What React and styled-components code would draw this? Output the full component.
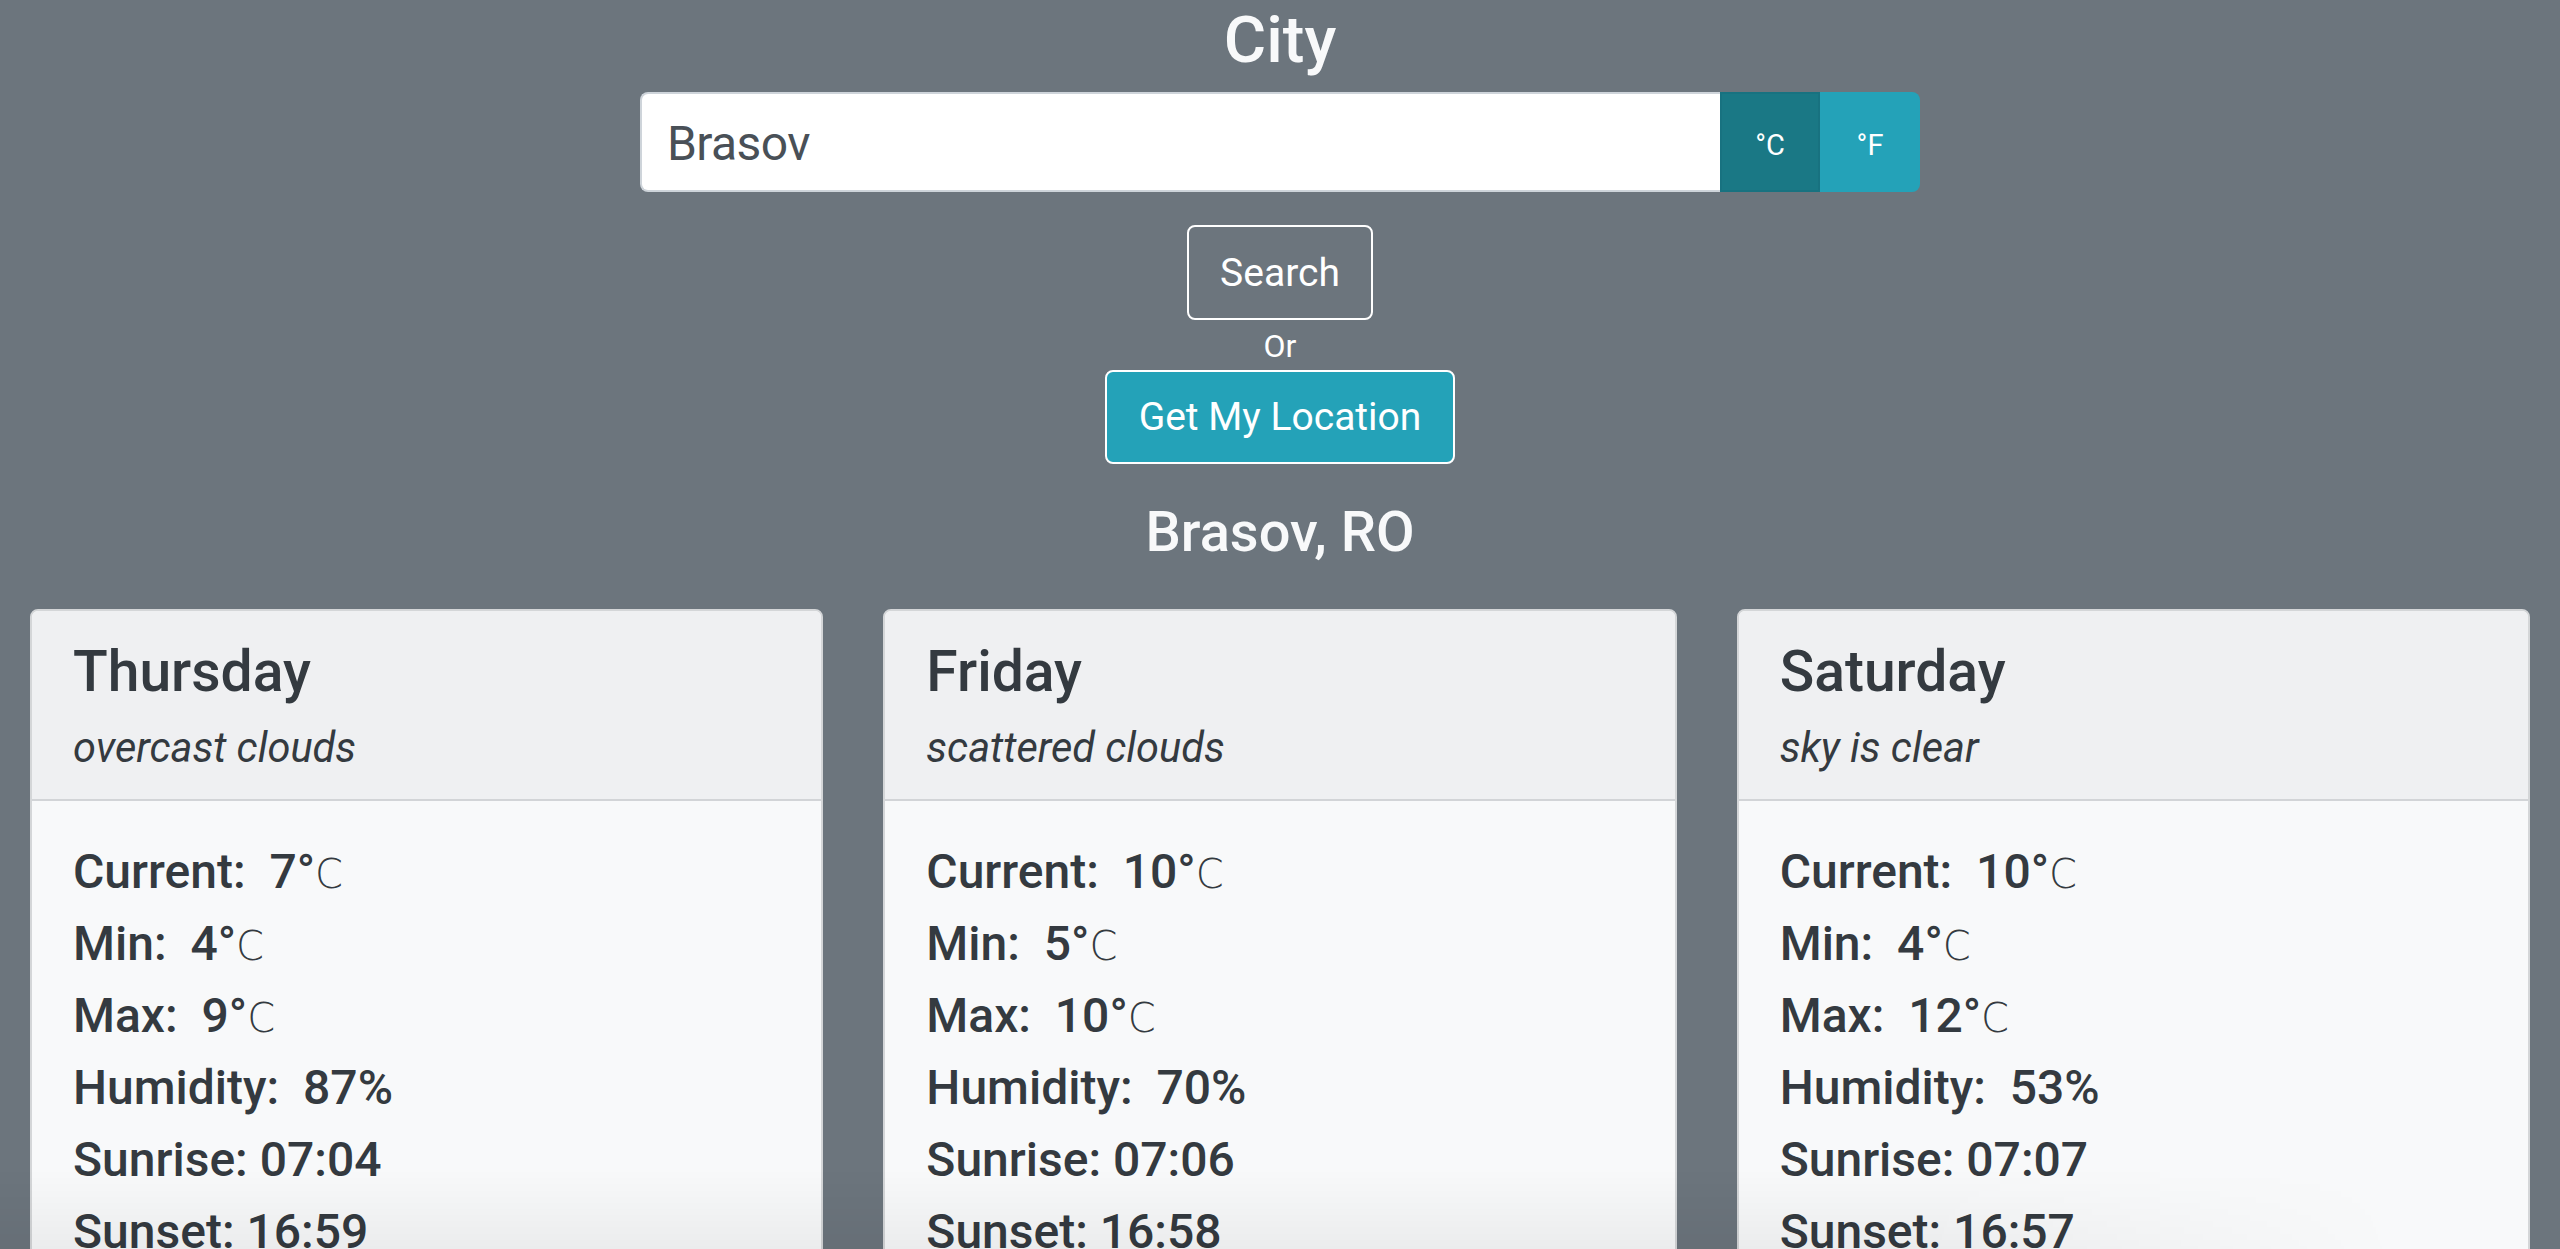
import React from "react";
import styled, { createGlobalStyle } from "styled-components";

const GlobalStyle = createGlobalStyle`
  * {
    box-sizing: border-box;
  }
  body {
    margin: 0;
    background: #6c757d;
    font-family: Roboto, Inter, "Liberation Sans", sans-serif;
    color: #f8f9fa;
  }
`;

const Page = styled.div`
  min-height: 100vh;
`;

const SearchArea = styled.div`
  display: flex;
  flex-direction: column;
  align-items: center;
`;

const Title = styled.h1`
  margin: 2px 0 14px;
  font-size: 65px;
  line-height: 76px;
  font-weight: 500;
  color: #f8f9fa;
`;

const InputGroup = styled.div`
  display: flex;
  width: 1280px;
  height: 100px;
`;

const CityInput = styled.input`
  flex: 1;
  min-width: 0;
  height: 100%;
  padding: 3px 25px 0;
  border: 2px solid #ced4da;
  border-right: none;
  border-radius: 8px 0 0 8px;
  background: #fff;
  color: #495057;
  font-family: inherit;
  font-size: 48px;
  letter-spacing: -0.6px;
  outline: none;
`;

const UnitButton = styled.button`
  width: 100px;
  height: 100%;
  border: none;
  border-radius: ${(p) => (p.last ? "0 8px 8px 0" : "0")};
  background: ${(p) => (p.active ? "#1a7885" : "#24a2b8")};
  box-shadow: ${(p) => (p.active ? "inset 0 0 0 2px #187280" : "none")};
  color: #fff;
  font-family: Roboto, "DejaVu Sans", sans-serif;
  font-size: 29px;
  padding: 6px 0 0;
  cursor: pointer;
`;

const OutlineButton = styled.button`
  margin-top: 33px;
  padding: 0 31px;
  height: 95px;
  border: 2px solid #fff;
  border-radius: 8px;
  background: transparent;
  color: #fff;
  font-family: inherit;
  font-size: 39px;
  cursor: pointer;
`;

const OrText = styled.div`
  margin-top: 6px;
  font-size: 32px;
  line-height: 40px;
  color: #fff;
`;

const InfoButton = styled.button`
  margin-top: 4px;
  padding: 0 32px;
  height: 94px;
  border: 2px solid #fff;
  border-radius: 8px;
  background: #24a2b8;
  color: #fff;
  font-family: inherit;
  font-size: 39px;
  cursor: pointer;
`;

const Location = styled.h2`
  margin: 36px 0 45px;
  font-size: 56px;
  line-height: 64px;
  font-weight: 500;
  color: #f8f9fa;
`;

const CardGrid = styled.div`
  display: grid;
  grid-template-columns: repeat(3, 1fr);
  gap: 60px;
  padding: 0 30px;
`;

const Card = styled.div`
  border: 2px solid #d4d6d8;
  border-radius: 8px;
  background: #f8f9fa;
  color: #343a40;
  overflow: hidden;
`;

const CardHeader = styled.div`
  padding: 27px 41px 19px;
  background: #eff0f2;
  border-bottom: 2px solid #d2d4d7;
`;

const Day = styled.h3`
  margin: 0 0 11px;
  font-size: 57px;
  line-height: 1.2;
  font-weight: 500;
`;

const Description = styled.div`
  font-size: 41.5px;
  line-height: 1.5;
  font-style: italic;
`;

const CardBody = styled.div`
  padding: 35px 41px;
`;

const Row = styled.div`
  font-size: 48px;
  line-height: 72px;
  height: 72px;
  font-weight: 500;
  white-space: pre;
`;

const Unit = styled.span`
  font-family: "DejaVu Sans", sans-serif;
  font-weight: 300;
  font-size: 40px;
  line-height: 1;
`;

const BottomShade = styled.div`
  position: fixed;
  left: 0;
  bottom: 0;
  width: 2400px;
  height: 80px;
  pointer-events: none;
  background: linear-gradient(to bottom, rgba(0, 0, 0, 0), rgba(0, 0, 0, 0.05));
  -webkit-mask-image: linear-gradient(to right, #000 80%, transparent);
  mask-image: linear-gradient(to right, #000 80%, transparent);
`;

const forecast = [
  { day: "Thursday", desc: "overcast clouds", cur: 7, min: 4, max: 9, hum: 87, rise: "07:04", set: "16:59" },
  { day: "Friday", desc: "scattered clouds", cur: 10, min: 5, max: 10, hum: 70, rise: "07:06", set: "16:58" },
  { day: "Saturday", desc: "sky is clear", cur: 10, min: 4, max: 12, hum: 53, rise: "07:07", set: "16:57" },
];

const DayCard = ({ item }) => (
  <Card>
    <CardHeader>
      <Day>{item.day}</Day>
      <Description>{item.desc}</Description>
    </CardHeader>
    <CardBody>
      <Row>
        {`Current:  ${item.cur}°`}
        <Unit>C</Unit>
      </Row>
      <Row>
        {`Min:  ${item.min}°`}
        <Unit>C</Unit>
      </Row>
      <Row>
        {`Max:  ${item.max}°`}
        <Unit>C</Unit>
      </Row>
      <Row>{`Humidity:  ${item.hum}%`}</Row>
      <Row>{`Sunrise: ${item.rise}`}</Row>
      <Row>{`Sunset: ${item.set}`}</Row>
    </CardBody>
  </Card>
);

export default function App() {
  return (
    <Page>
      <GlobalStyle />
      <SearchArea>
        <Title>City</Title>
        <InputGroup>
          <CityInput defaultValue="Brasov" />
          <UnitButton active>°C</UnitButton>
          <UnitButton last>°F</UnitButton>
        </InputGroup>
        <OutlineButton>Search</OutlineButton>
        <OrText>Or</OrText>
        <InfoButton>Get My Location</InfoButton>
        <Location>Brasov, RO</Location>
      </SearchArea>
      <CardGrid>
        {forecast.map((item) => (
          <DayCard key={item.day} item={item} />
        ))}
      </CardGrid>
      <BottomShade />
    </Page>
  );
}
